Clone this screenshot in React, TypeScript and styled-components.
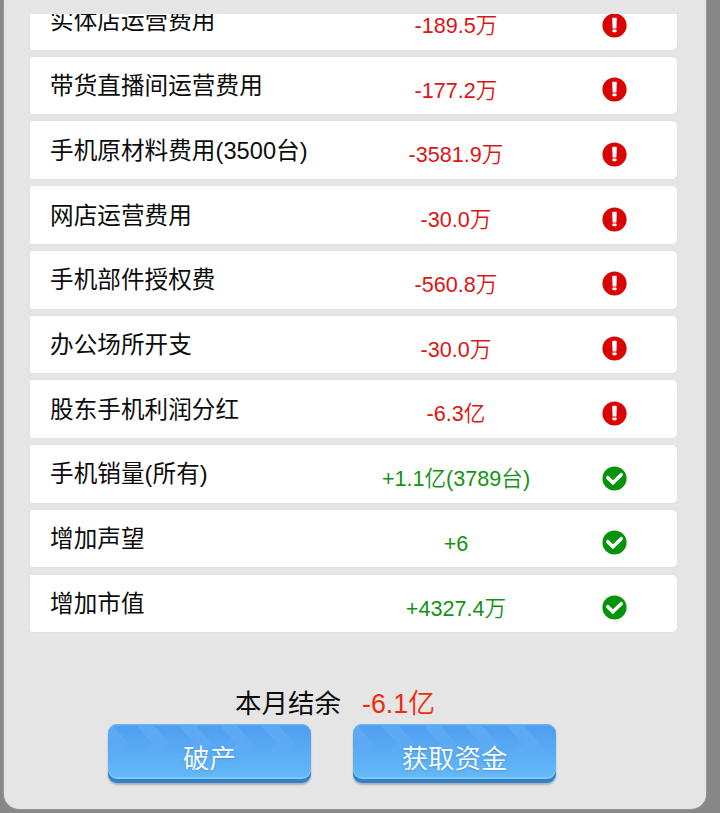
import React from 'react'
import styled, { createGlobalStyle } from 'styled-components'

type Kind = 'loss' | 'gain'

interface IRecord {
  name: string
  amount: string
  kind: Kind
}

const records: IRecord[] = [
  { name: '实体店运营费用', amount: '-189.5万', kind: 'loss' },
  { name: '带货直播间运营费用', amount: '-177.2万', kind: 'loss' },
  { name: '手机原材料费用(3500台)', amount: '-3581.9万', kind: 'loss' },
  { name: '网店运营费用', amount: '-30.0万', kind: 'loss' },
  { name: '手机部件授权费', amount: '-560.8万', kind: 'loss' },
  { name: '办公场所开支', amount: '-30.0万', kind: 'loss' },
  { name: '股东手机利润分红', amount: '-6.3亿', kind: 'loss' },
  { name: '手机销量(所有)', amount: '+1.1亿(3789台)', kind: 'gain' },
  { name: '增加声望', amount: '+6', kind: 'gain' },
  { name: '增加市值', amount: '+4327.4万', kind: 'gain' },
]

const GlobalStyle = createGlobalStyle`
  * {
    box-sizing: border-box;
  }
  body {
    margin: 0;
    background: #878787;
    font-family: 'Liberation Sans', 'Noto Sans CJK SC', sans-serif;
  }
`

const Page = styled.div`
  height: 813px;
  overflow: hidden;
  padding: 0 14px 4px 4px;
`

const Panel = styled.main`
  display: flex;
  flex-direction: column;
  height: 809px;
  padding: 14px 28px 0 26px;
  border-radius: 0 0 15px 15px;
  background: #e5e5e5;
  box-shadow: 0 0 2px #b5b5b5;
`

// 列表已滚动到底部，第一行只露出下半部分
const List = styled.div`
  display: flex;
  flex-direction: column;
  justify-content: flex-end;
  flex: none;
  gap: 7.05px;
  height: 619px;
  padding-bottom: 0.8px;
  overflow: hidden;
`

const Row = styled.div`
  display: grid;
  grid-template-columns: 300px 212px 115px;
  flex: none;
  height: 57.7px;
  width: 647px;
  padding-left: 20px;
  border-radius: 2px 5px 5px 2px;
  background: #fff;
  box-shadow: 0 0 2px 1px #dce1e6;
`

const Name = styled.span`
  padding-top: 0.4px;
  font-size: 23.6px;
  line-height: 58px;
  letter-spacing: 0.05px;
  white-space: nowrap;
  color: #0c0c0c;
`

const Amount = styled.span<{ $kind: Kind }>`
  padding-top: 5px;
  font-size: 21.6px;
  font-weight: 350;
  line-height: 58px;
  text-align: center;
  white-space: nowrap;
  color: ${({ $kind }) => ($kind === 'loss' ? '#dc1414' : '#149214')};
`

const StatusIcon = styled.svg`
  width: 25px;
  height: 25px;
  margin: 20.6px 0 0 40.2px;
`

const Summary = styled.div`
  display: flex;
  gap: 21px;
  margin: 51px 0 0 205px;
  font-size: 26.5px;
  line-height: 40px;
  color: #0c0c0c;
`

const Balance = styled.span`
  font-size: 26.8px;
  font-weight: 350;
  color: #ee2c0c;
`

const Actions = styled.div`
  display: flex;
  gap: 42px;
  padding-left: 78px;
`

const ActionButton = styled.button`
  position: relative;
  display: block;
  width: 203px;
  height: 59px;
  padding: 10px 0 0;
  border: 0;
  border-radius: 9px;
  overflow: hidden;
  background: linear-gradient(#4f9df0, #64b9f7 54px);
  box-shadow: inset 0 1.5px 0 #69b2f5, inset 0 -4px 0 #347fc6, inset 0 -6px 0 #7cc9fb;
  font-family: inherit;
  font-size: 26.4px;
  font-weight: 350;
  line-height: 50px;
  color: #fff;
`

const ButtonShadow = styled.div`
  border-radius: 9px;
  box-shadow: 0 2px 2px #a9b0b8;
`

const Stripes = styled.svg`
  position: absolute;
  left: 0;
  top: 2px;
  width: 203px;
  height: 36px;
`

const ButtonText = styled.span`
  position: relative;
  text-shadow: 0 1px 2px rgba(40, 100, 170, 0.35);
`

const Status: React.FC<{ kind: Kind }> = ({ kind }) => (
  <StatusIcon viewBox="0 0 25 25">
    {kind === 'loss' ? (
      <>
        <circle cx="12.5" cy="12.5" r="12.1" fill="#d90404" />
        <path d="M10.2 5.8q0-1 1-1h2.6q1 0 1 1l-.4 9.6h-3.8z" fill="#fff" />
        <rect x="10.4" y="16.6" width="4.2" height="2.6" rx="0.8" fill="#fff" />
      </>
    ) : (
      <>
        <circle cx="12.5" cy="12.5" r="12.1" fill="#06930b" />
        <path d="M5.8 11.7l5.1 5 8.3-8" fill="none" stroke="#fff" strokeWidth="3.6" strokeLinecap="round" />
      </>
    )}
  </StatusIcon>
)

const Action: React.FC<{ label: string }> = ({ label }) => (
  <ButtonShadow>
    <ActionButton>
      <Stripes viewBox="0 0 203 36">
        <defs>
          <linearGradient id="stripe" x1="0" y1="0" x2="0" y2="36" gradientUnits="userSpaceOnUse">
            <stop offset="0" stopColor="#7bbcf8" stopOpacity="0.36" />
            <stop offset="0.85" stopColor="#7bbcf8" stopOpacity="0" />
          </linearGradient>
        </defs>
        {[-12, 29, 71, 112, 154].map(x => (
          <path key={x} d={`M${x} 0h17l16 18-16 18h-17l16-18z`} fill="url(#stripe)" />
        ))}
      </Stripes>
      <ButtonText>{label}</ButtonText>
    </ActionButton>
  </ButtonShadow>
)

const App: React.FC = () => (
  <>
    <GlobalStyle />
    <Page>
      <Panel>
        <List>
          {records.map(({ name, amount, kind }) => (
            <Row key={name}>
              <Name>{name}</Name>
              <Amount $kind={kind}>{amount}</Amount>
              <Status kind={kind} />
            </Row>
          ))}
        </List>
        <Summary>
          <span>本月结余</span>
          <Balance>-6.1亿</Balance>
        </Summary>
        <Actions>
          <Action label="破产" />
          <Action label="获取资金" />
        </Actions>
      </Panel>
    </Page>
  </>
)

export default App
